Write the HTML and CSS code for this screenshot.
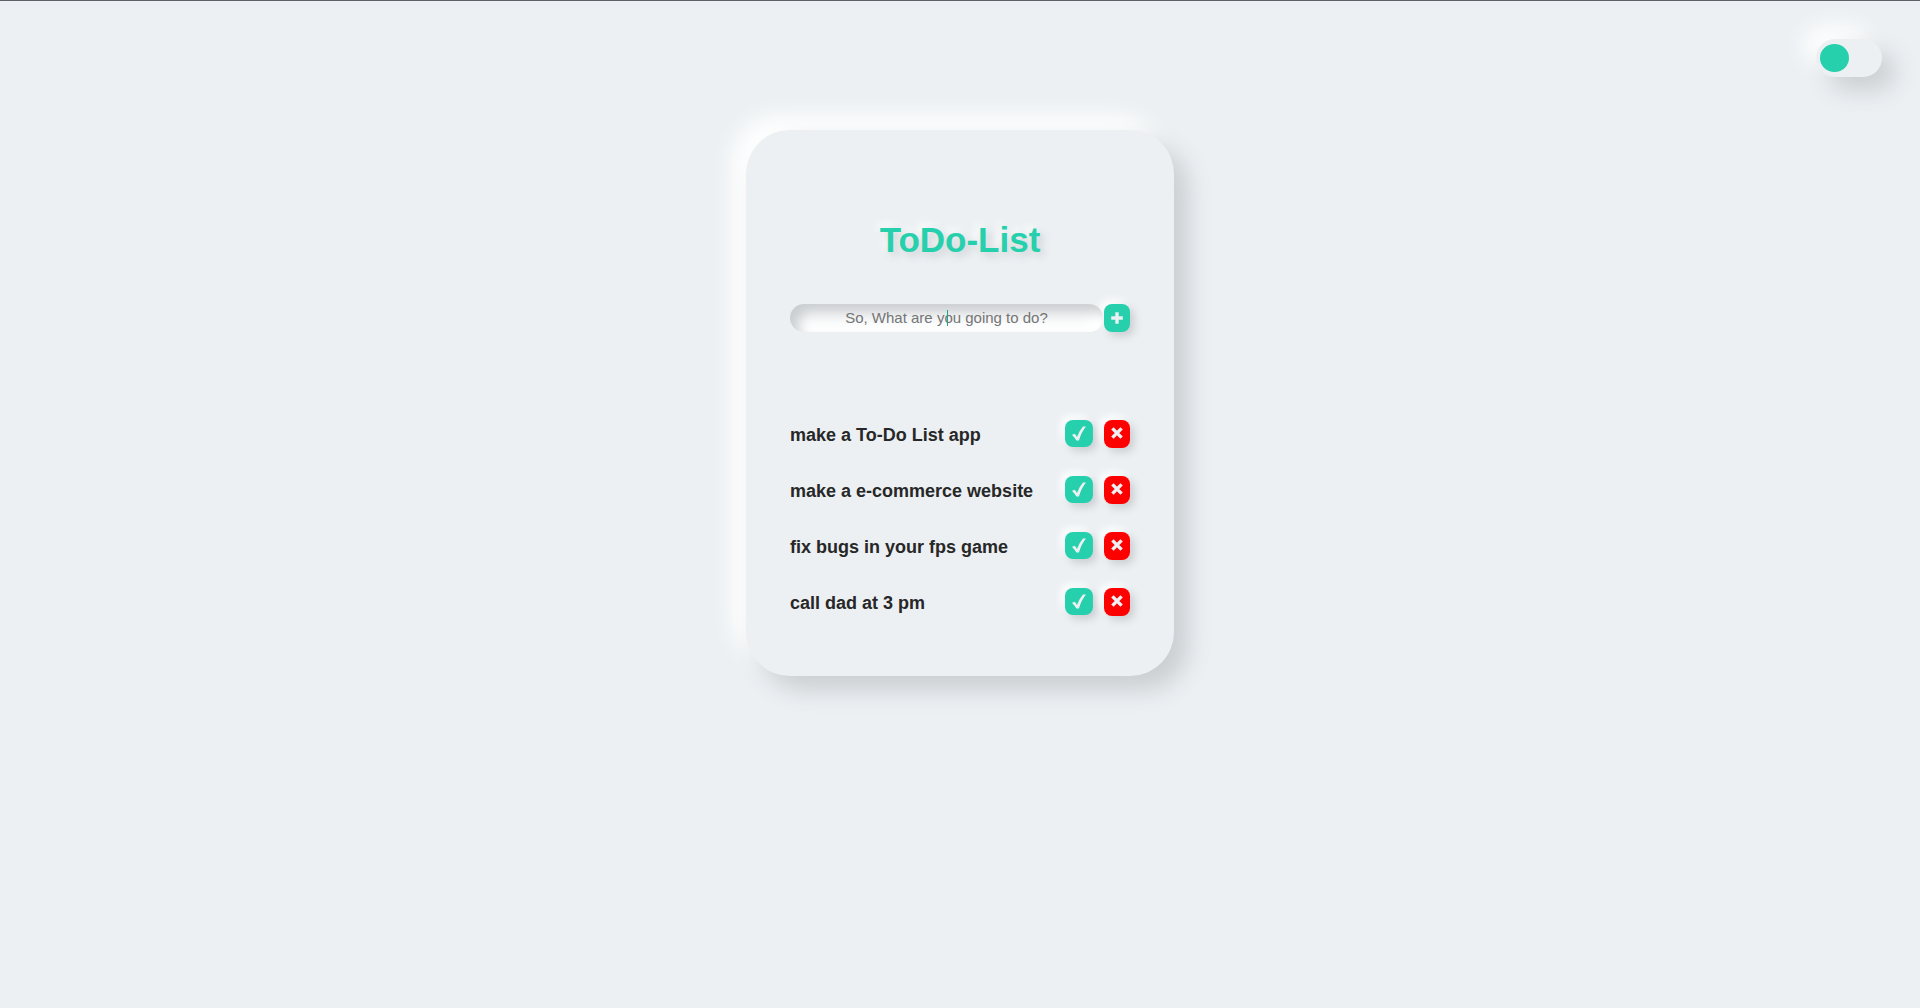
FILE: index.html
```html
<!DOCTYPE html>
<html lang="en">
<head>
<meta charset="utf-8">
<meta name="viewport" content="width=device-width, initial-scale=1">
<title>ToDo-List</title>
<link rel="stylesheet" href="styles.css">
</head>
<body>
<svg class="sprite" aria-hidden="true">
  <symbol id="plus" viewBox="0 0 12 12"><path d="M6 0.3V11.7M0.2 6H11.8"/></symbol>
  <symbol id="check" viewBox="0 0 14 15"><path class="tick" d="M0 8.9L2.4 7.7Q4 8.8 4.9 11Q7.6 4.4 11 0.6H14Q9.6 6 6.9 14.4H4.4Q2.6 11 0 8.9Z"/></symbol>
  <symbol id="cross" viewBox="0 0 12 14"><path d="M1.4 1.4L10.6 10.6M10.6 1.4L1.4 10.6"/></symbol>
</svg>
<header class="topbar">
  <label class="switch">
    <input class="switch-input" type="checkbox" aria-label="Dark mode">
    <span class="knob"></span>
  </label>
</header>
<main class="card">
  <h1 class="title">ToDo-List</h1>
  <form class="add-form">
    <div class="field">
      <input class="task-input" type="text" placeholder="So, What are you going to do?" aria-label="New task">
      <span class="caret"></span>
    </div>
    <button class="btn" type="button" aria-label="Add task"><svg class="icon"><use href="#plus"/></svg></button>
  </form>
  <ul class="tasks">
    <li class="task"><span class="task-name">make a To-Do List app</span><button class="btn btn-done" aria-label="Done"><svg class="icon icon-check"><use href="#check"/></svg></button><button class="btn btn-delete" aria-label="Delete"><svg class="icon icon-cross"><use href="#cross"/></svg></button></li>
    <li class="task"><span class="task-name">make a e-commerce website</span><button class="btn btn-done" aria-label="Done"><svg class="icon icon-check"><use href="#check"/></svg></button><button class="btn btn-delete" aria-label="Delete"><svg class="icon icon-cross"><use href="#cross"/></svg></button></li>
    <li class="task"><span class="task-name">fix bugs in your fps game</span><button class="btn btn-done" aria-label="Done"><svg class="icon icon-check"><use href="#check"/></svg></button><button class="btn btn-delete" aria-label="Delete"><svg class="icon icon-cross"><use href="#cross"/></svg></button></li>
    <li class="task"><span class="task-name">call dad at 3 pm</span><button class="btn btn-done" aria-label="Done"><svg class="icon icon-check"><use href="#check"/></svg></button><button class="btn btn-delete" aria-label="Delete"><svg class="icon icon-cross"><use href="#cross"/></svg></button></li>
  </ul>
</main>
</body>
</html>
```
FILE: styles.css
```css
* {
  box-sizing: border-box;
}

:root {
  --bg: #ecf0f3;
  --accent: #26d0ac;
  --dark: #cbced1;
}

body {
  margin: 0;
  min-height: 100vh;
  border-top: 1px solid #5f6068;
  background: var(--bg);
  color: #272727;
  font-family: Arial, "Liberation Sans", sans-serif;
}

.sprite {
  display: none;
}

.topbar {
  display: flex;
  justify-content: flex-end;
  padding: 38px 38px 0;
}

.switch {
  display: flex;
  align-items: center;
  width: 66px;
  height: 38px;
  padding: 0 4px;
  border-radius: 20px;
  background: var(--bg);
  box-shadow: 13px 13px 25px var(--dark), -13px -13px 25px #fff;
}

.switch-input {
  appearance: none;
  width: 0;
  height: 0;
  margin: 0;
}

.knob {
  width: 29px;
  height: 28px;
  border-radius: 50%;
  background: var(--accent);
}

.switch-input:checked + .knob {
  margin-left: auto;
}

.card {
  width: 428px;
  max-width: 100%;
  margin: 53px auto 0;
  padding: 88px 44px 58px;
  border-radius: 44px;
  background: var(--bg);
  box-shadow: 14px 14px 25px var(--dark), -14px -14px 25px #fff;
}

.title {
  margin: 0;
  color: var(--accent);
  font-size: 35px;
  line-height: 44px;
  text-align: center;
  text-shadow: 4px 4px 8px var(--dark), -4px -4px 8px #fff;
}

.add-form {
  display: flex;
  gap: 1px;
  margin-top: 42px;
}

.field {
  position: relative;
  flex: 1;
}

.task-input {
  display: block;
  width: 100%;
  height: 28px;
  padding: 0 12px;
  border: 0;
  border-radius: 14px;
  outline: 0;
  background: #f7f8f9;
  box-shadow: inset 8px 8px 12px var(--dark), inset -8px -8px 12px #fff;
  color: #272727;
  caret-color: var(--accent);
  font: 15px/28px Arial, "Liberation Sans", sans-serif;
  text-align: center;
}

.task-input::placeholder {
  color: #757575;
}

.caret {
  position: absolute;
  top: 6px;
  left: 50%;
  width: 1px;
  height: 16px;
  background: #1fa588;
}

.btn {
  display: flex;
  align-items: center;
  justify-content: center;
  width: 26px;
  height: 28px;
  padding: 0;
  border: 0;
  border-radius: 8px;
  background: var(--accent);
  color: var(--bg);
  box-shadow: 4px 4px 8px var(--dark), -4px -4px 8px #fff;
}

.btn-done {
  width: 28px;
  height: 27px;
}

.btn-delete {
  background: #f00;
}

.icon {
  width: 12px;
  height: 12px;
  fill: none;
  stroke: currentColor;
  stroke-width: 3.4;
}

.icon-check {
  width: 14px;
  height: 15px;
}

.icon-cross {
  height: 14px;
}

.tick {
  fill: currentColor;
  stroke: none;
}

.tasks {
  display: flex;
  flex-direction: column;
  gap: 26px;
  margin: 88px 0 0;
  padding: 0;
  list-style: none;
}

.task {
  display: flex;
  align-items: flex-start;
  gap: 11px;
}

.task-name {
  flex: 1;
  font-size: 18px;
  font-weight: 700;
  line-height: 30px;
}
```
